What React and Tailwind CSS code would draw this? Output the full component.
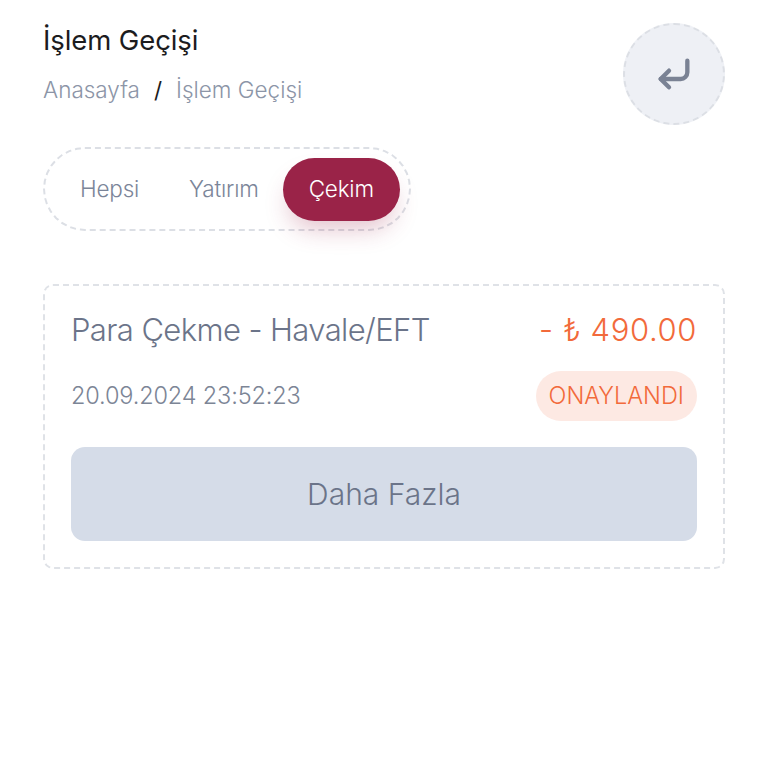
import React from "react";

export default function App() {
  return (
    <div className="w-[768px] h-[768px] bg-white" style={{ fontFamily: "Inter, 'Noto Sans', sans-serif" }}>
      <div className="px-[43px] pt-[22px]">
        <div className="flex items-start justify-between">
          <div>
            <h1 className="text-[27.5px] leading-[36px] text-[#1c1c1e] tracking-[-0.1px]">İşlem Geçişi</h1>
            <div className="mt-[17px] flex items-center text-[22.5px] leading-[30px] text-[#8c95a7] tracking-[0px] font-light">
              <span>Anasayfa</span>
              <span className="mx-[14px] text-[#1c1c1e] font-normal">/</span>
              <span>İşlem Geçişi</span>
            </div>
          </div>
          <button className="mt-[1px] w-[102px] h-[102px] rounded-full bg-[#eef0f5] border-2 border-dashed border-[#dcdfe5] flex items-center justify-center">
            <svg width="40" height="40" viewBox="0 0 24 24" fill="none" stroke="#7a8294" strokeWidth="2.6" strokeLinecap="round" strokeLinejoin="round">
              <polyline points="9 10 4 15 9 20" />
              <path d="M20 4v7a4 4 0 0 1-4 4H4" />
            </svg>
          </button>
        </div>

        <div className="mt-[22px] inline-flex items-center h-[84px] rounded-full border-2 border-dashed border-[#dcdfe5] pl-[35px] pr-[9px]">
          <span className="text-[22.5px] text-[#7b8599] tracking-[-0.2px] font-light">Hepsi</span>
          <span className="ml-[50px] text-[22.5px] text-[#7b8599] tracking-[-0.2px] font-light">Yatırım</span>
          <span className="ml-[24px] h-[63px] px-[26px] rounded-full bg-[#9a2348] text-white text-[22.5px] flex items-center tracking-[-0.2px] font-light shadow-[0_14px_24px_-6px_rgba(154,35,72,0.28)]">Çekim</span>
        </div>

        <div className="mt-[53px] rounded-[10px] border-2 border-dashed border-[#dfe2e7] px-[26px] pt-[24px] pb-[26px]">
          <div className="flex items-center justify-between">
            <span className="text-[31px] leading-[40px] text-[#6b7489] tracking-[-0.6px] font-light">Para Çekme - Havale/EFT</span>
            <span className="text-[31px] leading-[40px] text-[#f26a3b] tracking-[0.6px] font-light">- ₺ 490.00</span>
          </div>
          <div className="mt-[21px] flex items-center justify-between">
            <span className="text-[23.5px] text-[#7c8596] tracking-[-0.15px] font-light">20.09.2024 23:52:23</span>
            <span className="h-[50px] px-[13px] rounded-full bg-[#fde9e3] text-[#f26a3b] text-[23.5px] flex items-center tracking-[0px] font-light">ONAYLANDI</span>
          </div>
          <button className="mt-[26px] w-full h-[94px] rounded-[14px] bg-[#d5dce8] text-[30px] text-[#6b7489] tracking-[0px] font-light">Daha Fazla</button>
        </div>
      </div>
    </div>
  );
}
